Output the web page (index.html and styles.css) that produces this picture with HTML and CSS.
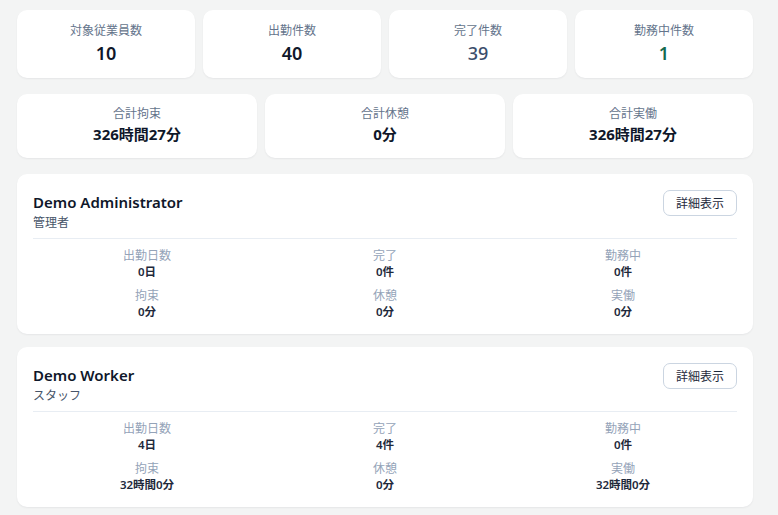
FILE: index.html
```html
<!DOCTYPE html>
<html lang="ja">
  <head>
    <meta charset="UTF-8" />
    <meta name="viewport" content="width=device-width, initial-scale=1.0" />
    <title>勤務集計</title>
    <link rel="stylesheet" href="styles.css">
  </head>
  <body>
    <div class="page">
      <div class="summary summary-4">
        <div class="stat-card">
          <div class="stat-label">対象従業員数</div>
          <div class="stat-value">10</div>
        </div>
        <div class="stat-card">
          <div class="stat-label">出勤件数</div>
          <div class="stat-value">40</div>
        </div>
        <div class="stat-card">
          <div class="stat-label">完了件数</div>
          <div class="stat-value done">39</div>
        </div>
        <div class="stat-card">
          <div class="stat-label">勤務中件数</div>
          <div class="stat-value working">1</div>
        </div>
      </div>

      <div class="summary summary-3">
        <div class="stat-card small">
          <div class="stat-label">合計拘束</div>
          <div class="stat-value">326時間27分</div>
        </div>
        <div class="stat-card small">
          <div class="stat-label">合計休憩</div>
          <div class="stat-value">0分</div>
        </div>
        <div class="stat-card small">
          <div class="stat-label">合計実働</div>
          <div class="stat-value">326時間27分</div>
        </div>
      </div>

      <div class="employee-card">
        <div class="employee-header">
          <div>
            <div class="employee-name">Demo Administrator</div>
            <div class="employee-role">管理者</div>
          </div>
          <button class="detail-button">詳細表示</button>
        </div>
        <div class="employee-stats">
          <div class="item"><div class="item-label">出勤日数</div><div class="item-value">0日</div></div>
          <div class="item"><div class="item-label">完了</div><div class="item-value">0件</div></div>
          <div class="item"><div class="item-label">勤務中</div><div class="item-value">0件</div></div>
          <div class="item"><div class="item-label">拘束</div><div class="item-value">0分</div></div>
          <div class="item"><div class="item-label">休憩</div><div class="item-value">0分</div></div>
          <div class="item"><div class="item-label">実働</div><div class="item-value">0分</div></div>
        </div>
      </div>

      <div class="employee-card">
        <div class="employee-header">
          <div>
            <div class="employee-name">Demo Worker</div>
            <div class="employee-role">スタッフ</div>
          </div>
          <button class="detail-button">詳細表示</button>
        </div>
        <div class="employee-stats">
          <div class="item"><div class="item-label">出勤日数</div><div class="item-value">4日</div></div>
          <div class="item"><div class="item-label">完了</div><div class="item-value">4件</div></div>
          <div class="item"><div class="item-label">勤務中</div><div class="item-value">0件</div></div>
          <div class="item"><div class="item-label">拘束</div><div class="item-value">32時間0分</div></div>
          <div class="item"><div class="item-label">休憩</div><div class="item-value">0分</div></div>
          <div class="item"><div class="item-label">実働</div><div class="item-value">32時間0分</div></div>
        </div>
      </div>
    </div>
  </body>
</html>
```

FILE: styles.css
```css
body {
  margin: 0;
  padding: 0;
  font-family: "Noto Sans", "Noto Sans CJK JP", sans-serif;
  background: #f3f4f4;
  color: #0f172a;
  overflow: hidden;
}

.page {
  width: 736px;
  padding: 10px 0 0 17px;
}

.summary {
  display: grid;
  gap: 8px;
  margin-bottom: 16px;
}

.summary-4 {
  grid-template-columns: repeat(4, 1fr);
}

.summary-3 {
  grid-template-columns: repeat(3, 1fr);
}

.stat-card {
  background: white;
  border-radius: 10px;
  box-shadow: 0 1px 2px rgba(15, 23, 42, 0.06);
  height: 68px;
  box-sizing: border-box;
  padding-top: 12px;
  text-align: center;
}

.stat-card.small {
  height: 64px;
  padding-top: 11px;
}

.stat-label {
  font-size: 12px;
  line-height: 18px;
  color: #64748b;
}

.stat-value {
  font-size: 18px;
  line-height: 26px;
  font-weight: 600;
  color: #0f172a;
}

.stat-card.small .stat-value {
  font-size: 15px;
  line-height: 22px;
  font-weight: 700;
}

.stat-value.done {
  color: #3b4d6b;
  font-weight: 500;
}

.stat-value.working {
  color: #166a4e;
}

.employee-card {
  background: white;
  border-radius: 10px;
  box-shadow: 0 1px 2px rgba(15, 23, 42, 0.06);
  height: 160px;
  box-sizing: border-box;
  padding: 16px 16px 0 16px;
  margin-bottom: 13px;
}

.employee-header {
  display: flex;
  justify-content: space-between;
  align-items: flex-start;
  padding-bottom: 6px;
  border-bottom: 1px solid #e8edf3;
}

.employee-name {
  font-size: 15px;
  line-height: 24px;
  font-weight: 600;
  color: #0f172a;
}

.employee-role {
  font-size: 12px;
  line-height: 18px;
  color: #475569;
}

.detail-button {
  background: white;
  border: 1px solid #cbd5e1;
  border-radius: 7px;
  width: 74px;
  height: 26px;
  font-family: inherit;
  font-size: 12px;
  color: #1e293b;
  cursor: pointer;
}

/* the three stat columns sit slightly wider than the divider */
.employee-stats {
  display: grid;
  grid-template-columns: repeat(3, 1fr);
  row-gap: 8px;
  padding-top: 9px;
  margin: 0 -5px 0 -5px;
  text-align: center;
}

.item-label {
  font-size: 12px;
  line-height: 16px;
  color: #94a3b8;
}

.item-value {
  font-size: 11.5px;
  line-height: 16px;
  font-weight: 600;
  color: #1e293b;
}
```
